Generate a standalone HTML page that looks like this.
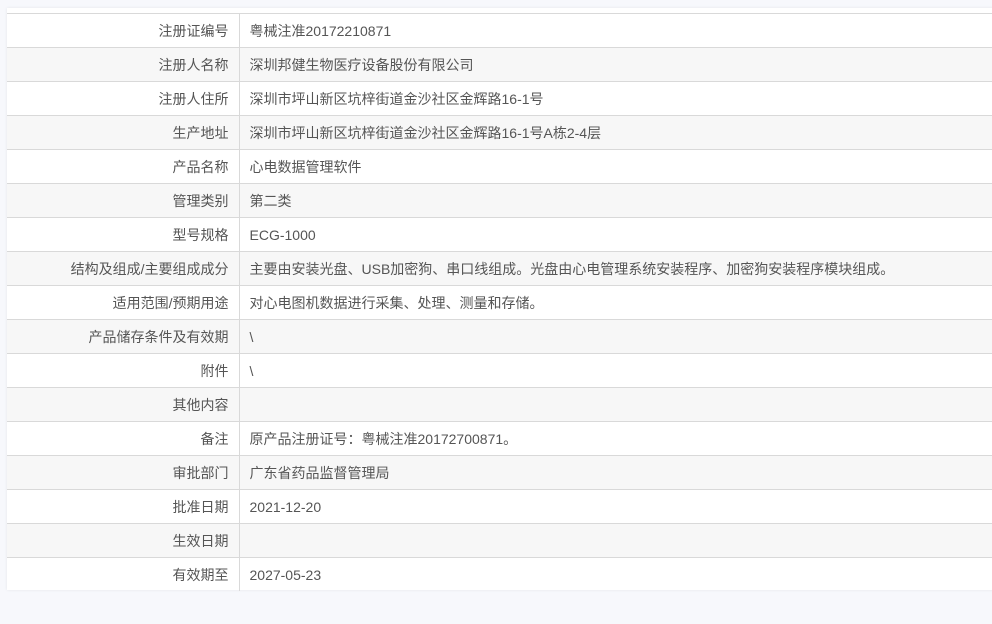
<!DOCTYPE html>
<html><head><meta charset="utf-8"><style>
html,body{margin:0;padding:0;background:#f7f8fc;width:992px;height:624px;overflow:hidden}
.panel{position:absolute;left:7px;top:8px;width:1000px;height:582px;background:#fff;box-shadow:0 0 3px rgba(0,0,0,.08)}
table{position:absolute;left:0;top:5px;width:1000px;border-collapse:collapse;font-family:"Liberation Sans","Noto Sans CJK SC",sans-serif;font-size:14px;color:#555}
td{height:33px;border-top:1px solid #d9d9d9;padding:0;vertical-align:middle}
td.l{width:232px;text-align:right;padding-right:10px;border-right:1px solid #d9d9d9;box-sizing:border-box}
td.v{padding-left:10px}
tr:nth-child(even){background:#f7f7f7}
</style></head><body><div class="panel"><table>
<tr><td class="l">注册证编号</td><td class="v">粤械注准20172210871</td></tr>
<tr><td class="l">注册人名称</td><td class="v">深圳邦健生物医疗设备股份有限公司</td></tr>
<tr><td class="l">注册人住所</td><td class="v">深圳市坪山新区坑梓街道金沙社区金辉路16-1号</td></tr>
<tr><td class="l">生产地址</td><td class="v">深圳市坪山新区坑梓街道金沙社区金辉路16-1号A栋2-4层</td></tr>
<tr><td class="l">产品名称</td><td class="v">心电数据管理软件</td></tr>
<tr><td class="l">管理类别</td><td class="v">第二类</td></tr>
<tr><td class="l">型号规格</td><td class="v">ECG-1000</td></tr>
<tr><td class="l">结构及组成/主要组成成分</td><td class="v">主要由安装光盘、USB加密狗、串口线组成。光盘由心电管理系统安装程序、加密狗安装程序模块组成。</td></tr>
<tr><td class="l">适用范围/预期用途</td><td class="v">对心电图机数据进行采集、处理、测量和存储。</td></tr>
<tr><td class="l">产品储存条件及有效期</td><td class="v">\</td></tr>
<tr><td class="l">附件</td><td class="v">\</td></tr>
<tr><td class="l">其他内容</td><td class="v"></td></tr>
<tr><td class="l">备注</td><td class="v">原产品注册证号：粤械注准20172700871。</td></tr>
<tr><td class="l">审批部门</td><td class="v">广东省药品监督管理局</td></tr>
<tr><td class="l">批准日期</td><td class="v">2021-12-20</td></tr>
<tr><td class="l">生效日期</td><td class="v"></td></tr>
<tr><td class="l">有效期至</td><td class="v">2027-05-23</td></tr>
</table></div></body></html>
